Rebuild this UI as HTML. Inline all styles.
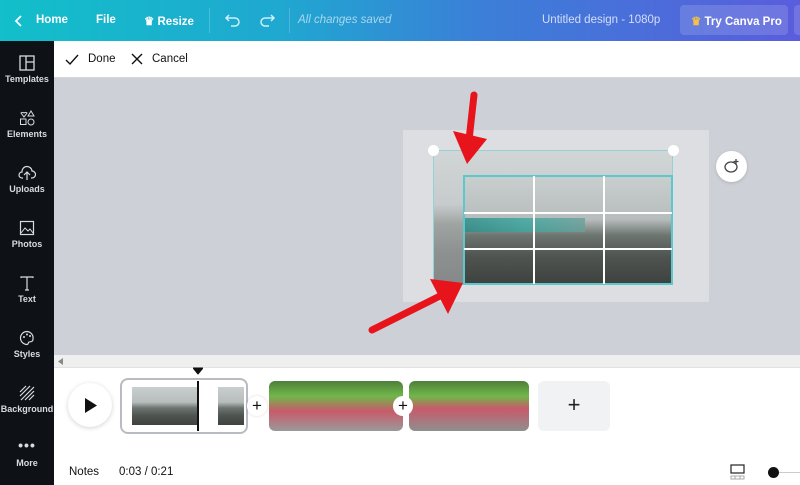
<!DOCTYPE html>
<html><head><meta charset="utf-8"><style>
*{margin:0;padding:0;box-sizing:border-box}
body{width:800px;height:485px;overflow:hidden;font-family:"Liberation Sans",sans-serif;background:#fff;position:relative}
.a{position:absolute}
.top{left:0;top:0;width:800px;height:41px;background:linear-gradient(90deg,#12bfca 0%,#1fa8d0 35%,#3b7fd8 60%,#5a5ddc 100%);color:#fff;font-size:11.5px;font-weight:bold}
.top span{position:absolute;top:14px}
.side{left:0;top:41px;width:54px;height:444px;background:#0e1217;color:#d8dbe0;font-size:9px;font-weight:bold;text-align:center}
.it{position:absolute;left:0;width:54px}
.it svg{display:block;margin:0 auto 3px}
.tb{left:54px;top:41px;width:746px;height:37px;background:#fff;border-bottom:1px solid #d5d7db;font-size:11.5px;color:#111}
.cv{left:54px;top:78px;width:746px;height:277px;background:#cdd0d6}
.sc{left:54px;top:355px;width:746px;height:13px;background:#efefef;border-bottom:1px solid #e2e2e2}
.img{background:linear-gradient(180deg,#c9cfce 0%,#b6bdbc 40%,#6d7570 55%,#4f5450 75%,#3f4340 100%)}
.c{border-radius:50%;background:#fff}
</style></head><body>
<div class="a top">
<svg class="a" style="left:14px;top:14px" width="10" height="14"><path d="M7 2L2 7l5 5" stroke="#fff" stroke-width="1.8" fill="none"/></svg>
<span style="left:36px">Home</span><span style="left:96px">File</span>
<span style="left:144px">♛ Resize</span>
<div class="a" style="left:209px;top:8px;width:1px;height:25px;background:rgba(255,255,255,.2)"></div>
<svg class="a" style="left:224px;top:12px" width="18" height="16"><path d="M5 3L2 6l3 3M2 6h9a4 4 0 010 8H7" stroke="#cfeffa" stroke-width="1.5" fill="none"/></svg>
<svg class="a" style="left:258px;top:12px" width="18" height="16"><path d="M13 3l3 3-3 3M16 6H7a4 4 0 000 8h4" stroke="#cfeffa" stroke-width="1.5" fill="none"/></svg>
<div class="a" style="left:289px;top:8px;width:1px;height:25px;background:rgba(255,255,255,.2)"></div>
<span style="left:298px;font-weight:normal;font-style:italic;color:#a8d8ee">All changes saved</span>
<span style="left:542px;font-weight:normal;color:#d6def8">Untitled design - 1080p</span>
<div class="a" style="left:680px;top:5px;width:108px;height:30px;background:rgba(255,255,255,.14);border-radius:4px"></div>
<span style="left:691px"><span style="color:#f5c342;position:static">♛</span> Try Canva Pro</span>
<div class="a" style="left:794px;top:5px;width:10px;height:30px;background:rgba(255,255,255,.14);border-radius:4px"></div>
</div>
<div class="a side">
<div class="it" style="top:14px"><svg width="16" height="16"><rect x="1" y="1" width="14" height="14" fill="none" stroke="#d8dbe0" stroke-width="1.3"/><path d="M7 1v14M7 7h8" stroke="#d8dbe0" stroke-width="1.3"/></svg>Templates</div>
<div class="it" style="top:69px"><svg width="16" height="16"><path d="M2 3a2 2 0 013 0 2 2 0 013 0L5 7z" fill="none" stroke="#d8dbe0"/><path d="M12 1l3 5H9z" fill="none" stroke="#d8dbe0"/><rect x="1.5" y="9" width="5.5" height="5.5" fill="none" stroke="#d8dbe0"/><circle cx="12" cy="12" r="3" fill="none" stroke="#d8dbe0"/></svg>Elements</div>
<div class="it" style="top:124px"><svg width="18" height="16"><path d="M5 13H4a3 3 0 010-6 5 5 0 0110-1 3 3 0 010 7h-1M9 15V8M6 10l3-3 3 3" fill="none" stroke="#d8dbe0" stroke-width="1.2"/></svg>Uploads</div>
<div class="it" style="top:179px"><svg width="16" height="16"><rect x="1.5" y="1.5" width="13" height="13" fill="none" stroke="#d8dbe0" stroke-width="1.2"/><path d="M2 13l4-5 3 3 2-2 3 4" fill="none" stroke="#d8dbe0"/></svg>Photos</div>
<div class="it" style="top:234px"><svg width="16" height="16"><path d="M2 3V2h12v1M8 2v13M6 15h4" fill="none" stroke="#d8dbe0" stroke-width="1.2"/></svg>Text</div>
<div class="it" style="top:289px"><svg width="16" height="16"><path d="M8 1.5a6.5 6.5 0 100 13c1.5 0 1-2 2-2.5s4 .5 4-3A6.5 6.5 0 008 1.5z" fill="none" stroke="#d8dbe0" stroke-width="1.2"/><circle cx="5" cy="7" r="1" fill="#d8dbe0"/><circle cx="8" cy="4.5" r="1" fill="#d8dbe0"/><circle cx="11" cy="6" r="1" fill="#d8dbe0"/></svg>Styles</div>
<div class="it" style="top:344px"><svg width="16" height="16"><path d="M1 7l6-6M1 11L11 1M2 15L15 2M6 15l9-9M10 15l5-5" stroke="#d8dbe0" stroke-width="1.2"/></svg>Background</div>
<div class="it" style="top:399px"><div style="font-size:14px;line-height:10px;letter-spacing:1px">•••</div><div style="margin-top:8px">More</div></div>
</div>
<div class="a tb">
<svg class="a" style="left:11px;top:13px" width="14" height="12"><path d="M1 6l4 4 8-9" stroke="#111" stroke-width="1.4" fill="none"/></svg>
<span class="a" style="left:34px;top:12px">Done</span>
<svg class="a" style="left:77px;top:12px" width="12" height="12"><path d="M1 1l10 10M11 1L1 11" stroke="#111" stroke-width="1.4"/></svg>
<span class="a" style="left:98px;top:12px">Cancel</span>
</div>
<div class="a cv"></div>
<div class="a" style="left:403px;top:130px;width:306px;height:172px;background:#dcdee2"></div>
<div class="a img" style="left:433px;top:150px;width:240px;height:135px;opacity:.55;border:1px solid #5cc8cc"></div>
<div class="a img" style="left:463px;top:175px;width:210px;height:110px;border:2px solid #5cc8cc"></div>
<div class="a" style="left:465px;top:218px;width:120px;height:14px;background:linear-gradient(90deg,#2a8e8a,#3aa7a0,#6aa09a);opacity:.8"></div>
<div class="a" style="left:533px;top:176px;width:2px;height:108px;background:#fff"></div>
<div class="a" style="left:603px;top:176px;width:2px;height:108px;background:#fff"></div>
<div class="a" style="left:464px;top:212px;width:208px;height:2px;background:#fff"></div>
<div class="a" style="left:464px;top:248px;width:208px;height:2px;background:#fff"></div>
<div class="a c" style="left:428px;top:145px;width:11px;height:11px"></div>
<div class="a c" style="left:668px;top:145px;width:11px;height:11px"></div>
<div class="a c" style="left:716px;top:151px;width:31px;height:31px;box-shadow:0 1px 3px rgba(0,0,0,.15)"></div>
<svg class="a" style="left:722px;top:157px" width="20" height="20"><ellipse cx="9" cy="10" rx="6" ry="5" fill="none" stroke="#444" stroke-width="1.3"/><path d="M14 2v5M11.5 4.5h5" stroke="#444" stroke-width="1.3"/></svg>
<svg class="a" style="left:360px;top:90px" width="130" height="250">
<path d="M114 5L109 50" stroke="#e8141b" stroke-width="7" stroke-linecap="round"/>
<path d="M93 41L127 49 107 74z" fill="#e8141b"/>
<path d="M12 240L82 205" stroke="#e8141b" stroke-width="7" stroke-linecap="round"/>
<path d="M70 189L88 224 103 193z" fill="#e8141b"/>
</svg>
<div class="a sc"><svg class="a" style="left:4px;top:3px" width="6" height="7"><path d="M5 0L0 3.5 5 7z" fill="#888"/></svg></div>
<div class="a c" style="left:68px;top:383px;width:44px;height:44px;box-shadow:0 1px 5px rgba(0,0,0,.18)"></div>
<svg class="a" style="left:84px;top:398px" width="14" height="15"><path d="M1 0l12 7.5L1 15z" fill="#111"/></svg>
<div class="a" style="left:120px;top:378px;width:128px;height:56px;border:2px solid #b8bcc2;border-radius:8px"></div>
<div class="a img" style="left:132px;top:387px;width:66px;height:38px"></div>
<div class="a img" style="left:218px;top:387px;width:26px;height:38px"></div>
<div class="a" style="left:197px;top:381px;width:2px;height:50px;background:#111"></div>
<svg class="a" style="left:193px;top:367px" width="10" height="8"><path d="M0 1h10L5 7z" fill="#111" stroke="#111" stroke-linejoin="round"/></svg>
<div class="a" style="left:269px;top:381px;width:134px;height:50px;border-radius:6px;background:linear-gradient(180deg,#4f7f3a 0%,#6fb84a 30%,#c85a6a 60%,#9a9a9a 100%)"></div>
<div class="a" style="left:409px;top:381px;width:120px;height:50px;border-radius:6px;background:linear-gradient(180deg,#4f7f3a 0%,#6fb84a 30%,#c85a6a 55%,#8d9090 100%)"></div>
<div class="a c" style="left:247px;top:396px;width:20px;height:20px;font-size:17px;line-height:19px;text-align:center;color:#111;box-shadow:0 0 3px rgba(0,0,0,.15)">+</div>
<div class="a c" style="left:393px;top:396px;width:20px;height:20px;font-size:17px;line-height:19px;text-align:center;color:#111">+</div>
<div class="a" style="left:538px;top:381px;width:72px;height:50px;border-radius:6px;background:#f1f2f4;text-align:center;font-size:22px;line-height:48px;color:#222">+</div>
<span class="a" style="left:69px;top:466px;font-size:11.5px;color:#111">Notes</span>
<span class="a" style="left:119px;top:466px;font-size:11.5px;color:#111">0:03 / 0:21</span>
<svg class="a" style="left:730px;top:464px" width="16" height="16"><rect x="1" y="1" width="13" height="8" fill="none" stroke="#222" stroke-width="1.2"/><path d="M1 12h13v3H1zM5 12v3M10 12v3" fill="none" stroke="#aaa"/></svg>
<div class="a" style="left:768px;top:467px;width:11px;height:11px;border-radius:50%;background:#111"></div>
<div class="a" style="left:779px;top:472px;width:21px;height:1px;background:#ccc"></div>
</body></html>
